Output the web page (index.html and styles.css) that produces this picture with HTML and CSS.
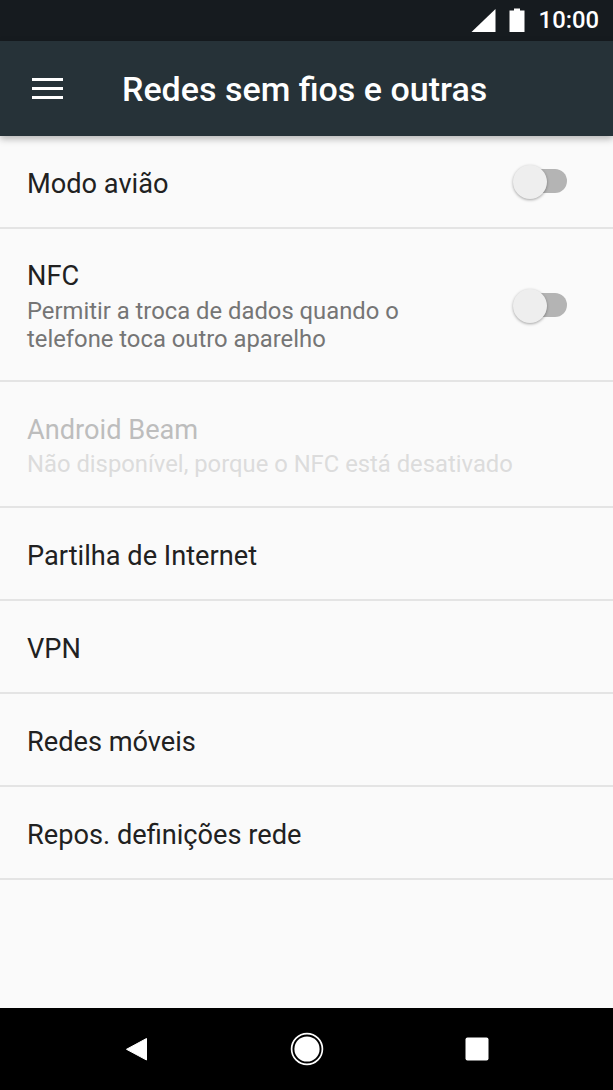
FILE: index.html
```html
<!DOCTYPE html>
<html lang="pt">
<head>
<meta charset="utf-8">
<title>Redes sem fios e outras</title>
<link rel="stylesheet" href="styles.css">
</head>
<body>
<div class="screen">
  <div class="status">
    <svg class="sig" width="25" height="24" viewBox="0 0 25 24"><path d="M24.5 1V24H0.5Z"/></svg>
    <svg class="bat" width="16" height="24" viewBox="0 0 16 24"><path d="M5 0.5H11V2.5H15.5V24H0.5V2.5H5Z"/></svg>
    <span class="time">10:00</span>
  </div>
  <header class="appbar">
    <svg class="menu" width="31" height="22" viewBox="0 0 31 22"><path d="M0 0H31V3H0ZM0 9H31V12H0ZM0 18H31V21H0Z"/></svg>
    <h1 class="title">Redes sem fios e outras</h1>
  </header>
  <main class="list">
    <div class="row row-single"><div class="label">Modo avião</div><span class="switch"></span></div>
    <div class="row row-nfc">
      <div class="texts"><div class="label">NFC</div><div class="sub">Permitir a troca de dados quando o<br>telefone toca outro aparelho</div></div>
      <span class="switch"></span>
    </div>
    <div class="row row-beam disabled">
      <div class="texts"><div class="label">Android Beam</div><div class="sub">Não disponível, porque o NFC está desativado</div></div>
    </div>
    <div class="row row-single"><div class="label">Partilha de Internet</div></div>
    <div class="row row-single"><div class="label">VPN</div></div>
    <div class="row row-single"><div class="label">Redes móveis</div></div>
    <div class="row row-single"><div class="label">Repos. definições rede</div></div>
  </main>
  <nav class="navbar">
    <svg width="24" height="24" viewBox="0 0 24 24"><path d="M21.5 1.5V23L1.5 12.3Z" stroke="#fff" stroke-width="1" stroke-linejoin="round" fill="#fff"/></svg>
    <svg width="34" height="34" viewBox="0 0 34 34"><circle cx="17" cy="17" r="15.4" fill="none" stroke="#fff" stroke-width="1.7"/><circle cx="17" cy="17" r="12.6" fill="#fff"/></svg>
    <svg width="24" height="24" viewBox="0 0 24 24"><rect x="0.5" y="0.5" width="23" height="23" rx="2" fill="#fff"/></svg>
  </nav>
</div>
</body>
</html>
```
FILE: styles.css
```css
* { box-sizing: border-box; }
html, body { margin: 0; padding: 0; }
body { font-family: Roboto, "Liberation Sans", sans-serif; background: #fafafa; }
.screen { width: 613px; height: 1090px; display: flex; flex-direction: column; overflow: hidden; }
.status { height: 41px; flex: none; background: #161b1f; display: flex; align-items: center; justify-content: flex-end; padding-right: 14px; color: #fff; }
.sig, .bat { fill: #fff; }
.sig { margin-right: 13px; margin-top: -1px; }
.bat { margin-right: 14px; margin-top: -1px; }
.time { font-size: 23.8px; font-weight: 500; line-height: 41px; }
.appbar { height: 95px; flex: none; background: #263238; display: flex; align-items: center; padding-left: 32px; box-shadow: 0 3px 7px rgba(0,0,0,.28); position: relative; }
.menu { fill: #fff; margin-right: 59px; }
.title { margin: 0; font-size: 34px; font-weight: 500; color: #fff; line-height: 40px; white-space: nowrap; }
.list { flex: 1; }
.row { display: flex; align-items: center; justify-content: space-between; padding: 0 46px 0 27px; border-bottom: 2px solid #e4e4e4; }
.row-single { height: 93px; }
.row-nfc { height: 153px; }
.row-beam { height: 126px; }
.row > .label, .texts { padding-top: 4px; }
.label { font-size: 27.2px; line-height: 32px; color: #212121; }
.sub { font-size: 23.8px; line-height: 28px; color: #757575; margin-top: 5px; }
.disabled .label { color: #bdbdbd; }
.disabled .sub { color: #dcdcdc; margin-top: 4px; }
.switch { width: 45px; height: 24px; border-radius: 12px; background: #b4b4b4; position: relative; flex: none; margin-top: -1px; }
.row-nfc .switch { margin-top: 1px; }
.switch::before { content: ""; position: absolute; left: -9px; top: -4px; width: 34px; height: 34px; border-radius: 50%; background: #eeeeee; box-shadow: 0 1px 3px rgba(0,0,0,.35); }
.navbar { height: 82px; flex: none; background: #000; display: flex; align-items: center; justify-content: space-between; padding: 0 124px 0 125px; }
```
